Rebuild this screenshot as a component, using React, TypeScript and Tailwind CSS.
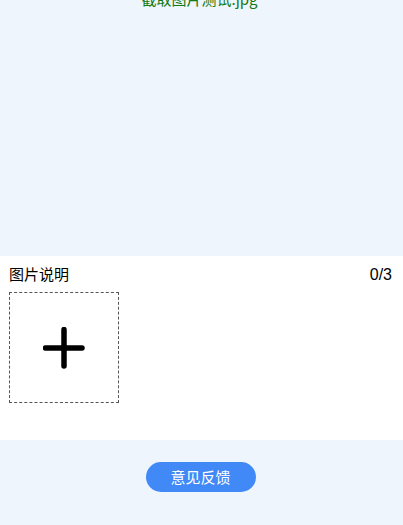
export default function App() {
  return (
    <div
      className="w-[403px] h-[525px] overflow-hidden bg-[#eef5fd] flex flex-col"
      style={{ fontFamily: '"Noto Sans CJK SC", "Microsoft YaHei", sans-serif' }}
    >
      <div className="h-[256px] flex justify-center">
        <div className="mt-[-11px] pr-[4px] text-[15px] leading-[20px] text-[#137a13]">截取图片测试.jpg</div>
      </div>
      <div className="bg-white h-[184px] px-[9px] pt-[8px]">
        <div className="flex justify-between items-center h-[21px] text-[15px] text-black">
          <span>图片说明</span>
          <span className="pr-[2px] text-[16px]" style={{ fontFamily: '"Liberation Sans", sans-serif' }}>0/3</span>
        </div>
        <div className="mt-[7px] w-[110px] h-[111px] border border-dashed border-[#555] flex items-center justify-center">
          <svg width="42" height="42" viewBox="0 0 42 42">
            <path d="M21 2.5V39M2.5 21H39" stroke="black" strokeWidth="5.5" strokeLinecap="round" fill="none" />
          </svg>
        </div>
      </div>
      <div className="flex justify-center pt-[22px] pr-[2px]">
        <button className="w-[110px] h-[30px] rounded-full bg-[#4189f7] text-white text-[15px] leading-[30px]">
          意见反馈
        </button>
      </div>
    </div>
  );
}
